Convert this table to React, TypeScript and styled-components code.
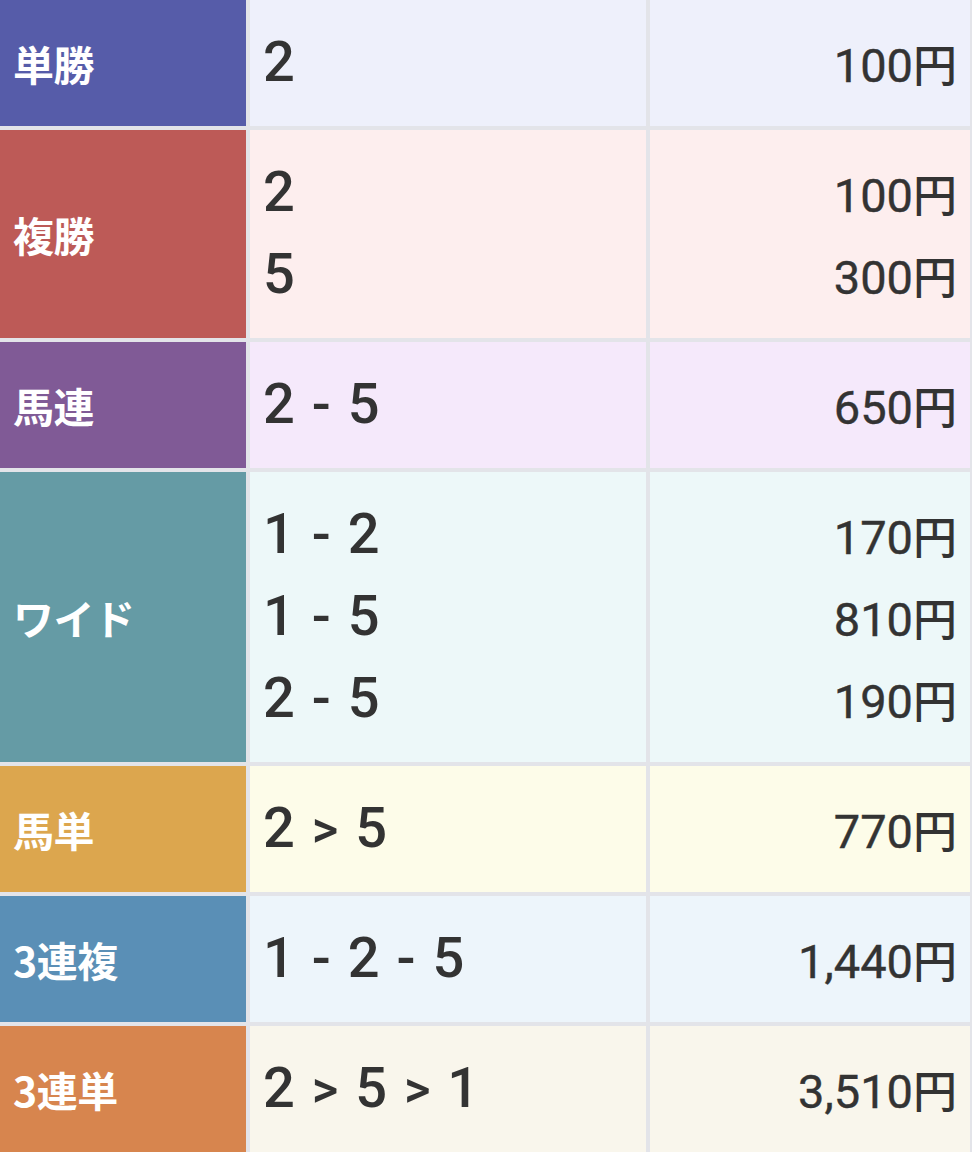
import React from 'react';
import styled, { createGlobalStyle } from 'styled-components';

const GlobalStyle = createGlobalStyle`
	html, body {
		margin: 0;
		padding: 0;
		background: #ffffff;
	}
	body {
		font-family: 'Noto Sans CJK JP', 'Noto Sans', sans-serif;
		color: #333333;
	}
`;

type BetKind = 'tan' | 'fuku' | 'umaren' | 'wide' | 'umatan' | 'trio' | 'trifecta';

const palette: Record<BetKind, { label: string; cell: string }> = {
	tan: { label: '#565ca9', cell: '#eef0fb' },
	fuku: { label: '#bd5a57', cell: '#fdeeee' },
	umaren: { label: '#805a96', cell: '#f5e9fb' },
	wide: { label: '#659ba5', cell: '#edf8f9' },
	umatan: { label: '#dca64e', cell: '#fdfce9' },
	trio: { label: '#5a8fb6', cell: '#edf5fb' },
	trifecta: { label: '#d7854e', cell: '#f9f6ec' },
};

const numberFont = `Roboto, 'Noto Sans CJK JP', sans-serif`;

const PayoutTable = styled.div`
	display: grid;
	grid-template-columns: 246px 396px 1fr;
	gap: 4px;
	padding-right: 2px;
	background: #e3e4e9;
	width: 972px;
	box-sizing: border-box;
`;

const LabelCell = styled.div<{ $kind: BetKind }>`
	display: flex;
	align-items: center;
	padding: 0 0 0 13px;
	background: ${({ $kind }) => palette[$kind].label};
	color: #ffffff;
	font-size: 41px;
	font-weight: 700;
	letter-spacing: -0.5px;
`;

const ValueCell = styled.div<{ $kind: BetKind }>`
	display: flex;
	flex-direction: column;
	padding: 22px 13px;
	background: ${({ $kind }) => palette[$kind].cell};
`;

const ComboLine = styled.div`
	height: 82px;
	line-height: 82px;
	font-family: ${numberFont};
	font-size: 56px;
	font-weight: 500;
	color: #333333;
	white-space: pre;
	word-spacing: 3px;
	position: relative;
	top: -1px;
`;

const Sep = styled.span<{ $arrow?: boolean }>`
	font-size: ${({ $arrow }) => ($arrow ? '51px' : '56px')};
	font-weight: 500;
`;

const PayoutLine = styled.div`
	height: 82px;
	line-height: 82px;
	font-family: ${numberFont};
	font-size: 47px;
	font-weight: 400;
	color: #333333;
	text-align: right;
	-webkit-text-stroke: 0.4px #333333;
`;

const Yen = styled.span`
	font-family: 'Noto Sans CJK JP', sans-serif;
	font-size: 44px;
	font-weight: 500;
	-webkit-text-stroke: 0;
`;

interface Payout {
	kind: BetKind;
	name: string;
	entries: { combo: string; amount: string }[];
}

const payouts: Payout[] = [
	{ kind: 'tan', name: '単勝', entries: [{ combo: '2', amount: '100' }] },
	{
		kind: 'fuku',
		name: '複勝',
		entries: [
			{ combo: '2', amount: '100' },
			{ combo: '5', amount: '300' },
		],
	},
	{ kind: 'umaren', name: '馬連', entries: [{ combo: '2 - 5', amount: '650' }] },
	{
		kind: 'wide',
		name: 'ワイド',
		entries: [
			{ combo: '1 - 2', amount: '170' },
			{ combo: '1 - 5', amount: '810' },
			{ combo: '2 - 5', amount: '190' },
		],
	},
	{ kind: 'umatan', name: '馬単', entries: [{ combo: '2 > 5', amount: '770' }] },
	{ kind: 'trio', name: '3連複', entries: [{ combo: '1 - 2 - 5', amount: '1,440' }] },
	{ kind: 'trifecta', name: '3連単', entries: [{ combo: '2 > 5 > 1', amount: '3,510' }] },
];

const renderCombo = (combo: string) =>
	combo.split(' ').map((token, i) => {
		const isSep = token === '-' || token === '>';
		return (
			<React.Fragment key={i}>
				{i > 0 && ' '}
				{isSep ? <Sep $arrow={token === '>'}>{token}</Sep> : token}
			</React.Fragment>
		);
	});

const App: React.FC = () => {
	return (
		<>
			<GlobalStyle />
			<PayoutTable>
				{payouts.map((p) => (
					<React.Fragment key={p.kind}>
						<LabelCell $kind={p.kind}>{p.name}</LabelCell>
						<ValueCell $kind={p.kind}>
							{p.entries.map((e) => (
								<ComboLine key={e.combo}>{renderCombo(e.combo)}</ComboLine>
							))}
						</ValueCell>
						<ValueCell $kind={p.kind}>
							{p.entries.map((e) => (
								<PayoutLine key={e.combo}>
									{e.amount}
									<Yen>円</Yen>
								</PayoutLine>
							))}
						</ValueCell>
					</React.Fragment>
				))}
			</PayoutTable>
		</>
	);
};

export default App;
